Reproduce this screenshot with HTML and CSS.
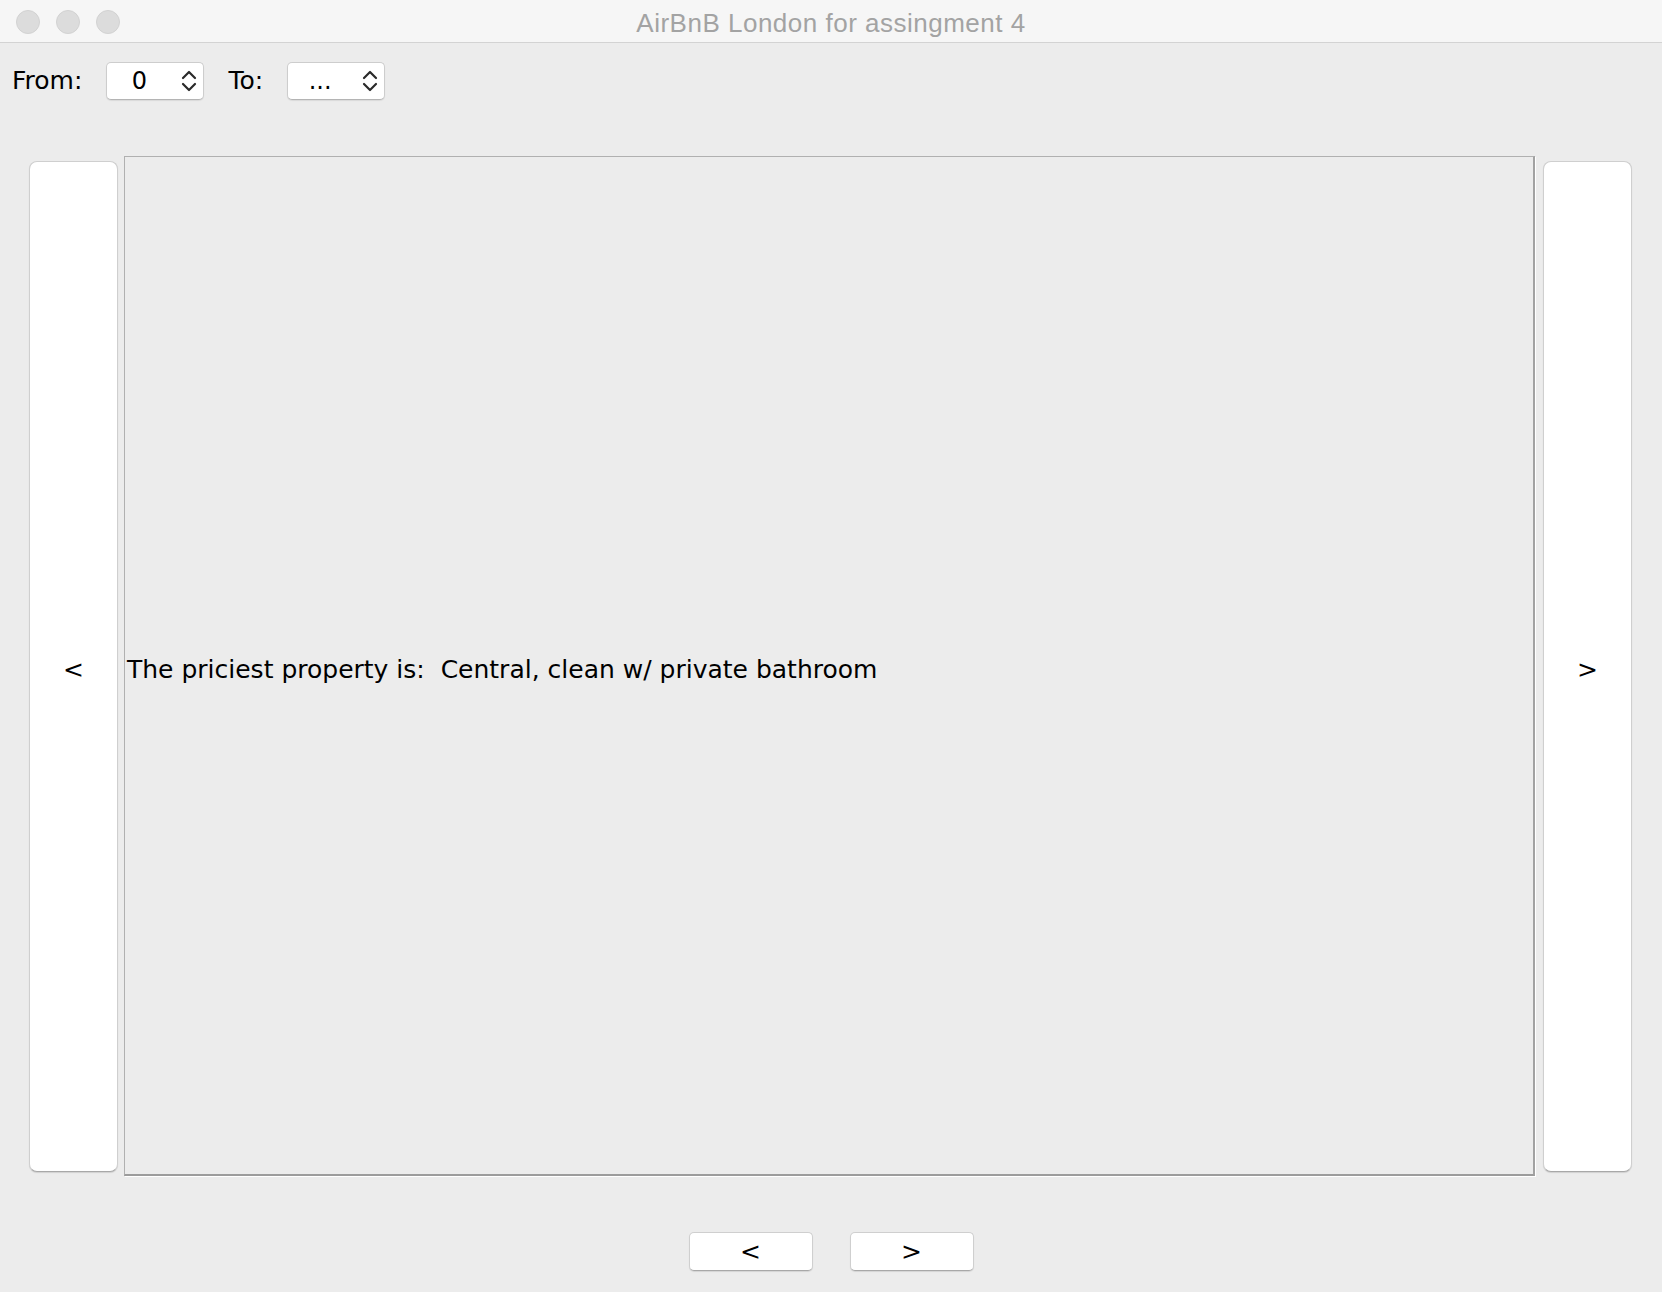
FILE: index.html
```html
<!DOCTYPE html>
<html>
<head>
<meta charset="utf-8">
<title>AirBnB London for assingment 4</title>
<link rel="stylesheet" href="styles.css">
</head>
<body>
<div class="window">
  <div class="titlebar">
    <div class="lights">
      <span class="light"></span><span class="light"></span><span class="light"></span>
    </div>
    <div class="title">AirBnB London for assingment 4</div>
  </div>
  <div class="toolbar">
    <span class="label">From:</span>
    <div class="spinner">
      <span class="value">0</span>
      <svg class="arrows" width="16" height="22" viewBox="0 0 16 22"><path d="M2 8 L8 2 L14 8 M2 14 L8 20 L14 14" fill="none" stroke="#2a2a2a" stroke-width="2.2" stroke-linecap="round" stroke-linejoin="round"/></svg>
    </div>
    <span class="label">To:</span>
    <div class="spinner">
      <span class="value">...</span>
      <svg class="arrows" width="16" height="22" viewBox="0 0 16 22"><path d="M2 8 L8 2 L14 8 M2 14 L8 20 L14 14" fill="none" stroke="#2a2a2a" stroke-width="2.2" stroke-linecap="round" stroke-linejoin="round"/></svg>
    </div>
  </div>
  <div class="main">
    <button class="side-btn">&lt;</button>
    <div class="panel">
      <span class="panel-text">The priciest property is:&nbsp; Central, clean w/ private bathroom</span>
    </div>
    <button class="side-btn">&gt;</button>
  </div>
  <div class="footer">
    <button class="nav-btn">&lt;</button>
    <button class="nav-btn">&gt;</button>
  </div>
</div>
</body>
</html>
```
FILE: styles.css
```css
html, body {
  margin: 0;
  padding: 0;
  background: #ececec;
}
.window {
  width: 1662px;
  height: 1292px;
  background: #ececec;
  font-family: "DejaVu Sans", "Liberation Sans", sans-serif;
  color: #000;
  overflow: hidden;
}
.titlebar {
  position: relative;
  height: 42px;
  background: #f6f6f6;
  border-bottom: 1px solid #d3d3d3;
  display: flex;
  align-items: center;
  justify-content: center;
}
.lights {
  position: absolute;
  left: 16px;
  top: 10px;
  display: flex;
  gap: 16px;
}
.light {
  width: 22px;
  height: 22px;
  border-radius: 50%;
  background: #dcdcdc;
  border: 1px solid #d2d2d2;
}
.title {
  font-family: "Liberation Sans", Arial, sans-serif;
  font-size: 26px;
  letter-spacing: 0.5px;
  color: #a3a3a3;
  line-height: 42px;
  padding-top: 3px;
}
.toolbar {
  height: 113px;
  box-sizing: border-box;
  padding: 19px 0 0 12px;
  display: flex;
  align-items: flex-start;
  gap: 24px;
}
.label {
  font-size: 25px;
  line-height: 38px;
  height: 38px;
}
.spinner {
  width: 96px;
  height: 36px;
  background: #fff;
  border: 1px solid #cdcdcd;
  border-bottom-color: #b4b4b4;
  border-radius: 5px;
  box-shadow: 0 1px 1px rgba(0,0,0,0.08);
  display: flex;
  align-items: center;
  position: relative;
}
.spinner .value {
  font-size: 24px;
  width: 64px;
  text-align: center;
  line-height: 36px;
}
.spinner .arrows {
  margin-left: 10px;
}
.main {
  display: flex;
  align-items: center;
  padding-left: 29px;
  height: 1020px;
}
.side-btn {
  width: 89px;
  height: 1011px;
  background: #fff;
  border: 1px solid #cfcfcf;
  border-bottom-color: #a8a8a8;
  border-radius: 8px;
  box-shadow: 0 1px 1px rgba(0,0,0,0.12);
  font-family: "DejaVu Sans", sans-serif;
  font-size: 25px;
  color: #000;
  padding: 6px 0 0 0;
  margin: 0;
}
.panel {
  width: 1411px;
  height: 1020px;
  box-sizing: border-box;
  margin: 0 8px 0 6px;
  background: #ececec;
  border: 1px solid #b0b0b0;
  border-right: 2px solid #a2a2a2;
  border-bottom: 2px solid #9c9c9c;
  box-shadow: 1px 1px 0 #ffffff;
  display: flex;
  align-items: center;
  padding: 8px 0 0 2px;
}
.panel-text {
  font-size: 25px;
  white-space: pre;
}
.footer {
  display: flex;
  justify-content: center;
  gap: 37px;
  padding-top: 56px;
}
.nav-btn {
  width: 124px;
  height: 39px;
  background: #fff;
  border: 1px solid #cfcfcf;
  border-bottom-color: #a8a8a8;
  border-radius: 5px;
  box-shadow: 0 1px 1px rgba(0,0,0,0.1);
  font-family: "DejaVu Sans", sans-serif;
  font-size: 25px;
  color: #000;
  padding: 0;
  margin: 0;
}
```
